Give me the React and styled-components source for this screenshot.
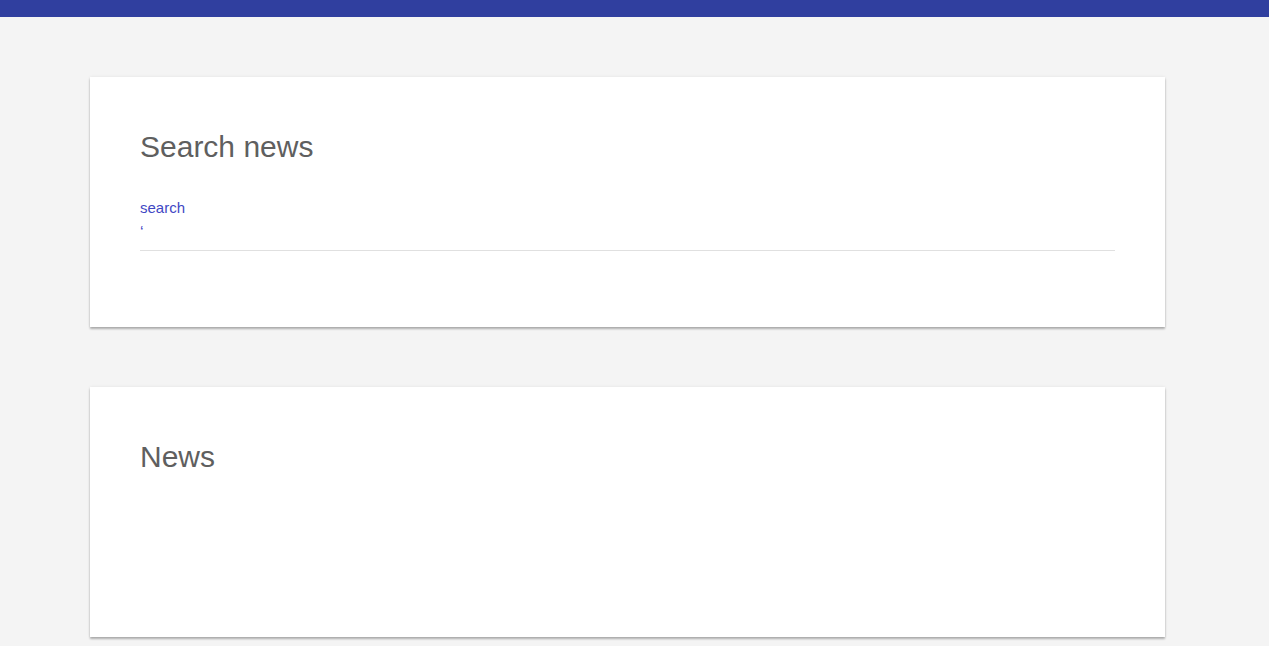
import React from "react";
import styled, { createGlobalStyle } from "styled-components";

const GlobalStyle = createGlobalStyle`
  html, body {
    margin: 0;
    padding: 0;
    background: #f4f4f4;
    font-family: "Liberation Sans", Arial, sans-serif;
  }
`;

const TopBar = styled.header`
  height: 17px;
  background: #303f9f;
`;

const Main = styled.main`
  display: flex;
  flex-direction: column;
  gap: 60px;
  width: 1075px;
  padding: 60px 0 40px 90px;
`;

const Card = styled.section`
  box-sizing: border-box;
  min-height: 250px;
  padding: 52px 50px 40px;
  background: #ffffff;
  box-shadow: 0 2px 2px rgba(0, 0, 0, 0.28), 0 0 3px rgba(0, 0, 0, 0.08);
`;

const Title = styled.h2`
  margin: 0;
  font-size: 30px;
  line-height: 36px;
  font-weight: 400;
  color: #5f5f5f;
`;

const Field = styled.div`
  display: flex;
  flex-direction: column;
  margin-top: 34px;
`;

const Label = styled.label`
  font-size: 15px;
  line-height: 18px;
  color: #3f48c4;
`;

const Input = styled.input`
  box-sizing: border-box;
  width: 100%;
  height: 34px;
  margin: 0;
  padding: 0 0 2px;
  border: none;
  border-bottom: 1px solid #e0e0e0;
  outline: none;
  background: transparent;
  font-family: "Liberation Sans", Arial, sans-serif;
  font-size: 16px;
  color: #3f48c4;
`;

export default function App() {
  return (
    <>
      <GlobalStyle />
      <TopBar />
      <Main>
        <Card>
          <Title>Search news</Title>
          <Field>
            <Label htmlFor="search">search</Label>
            <Input id="search" defaultValue="‘" readOnly />
          </Field>
        </Card>
        <Card>
          <Title>News</Title>
        </Card>
      </Main>
    </>
  );
}
